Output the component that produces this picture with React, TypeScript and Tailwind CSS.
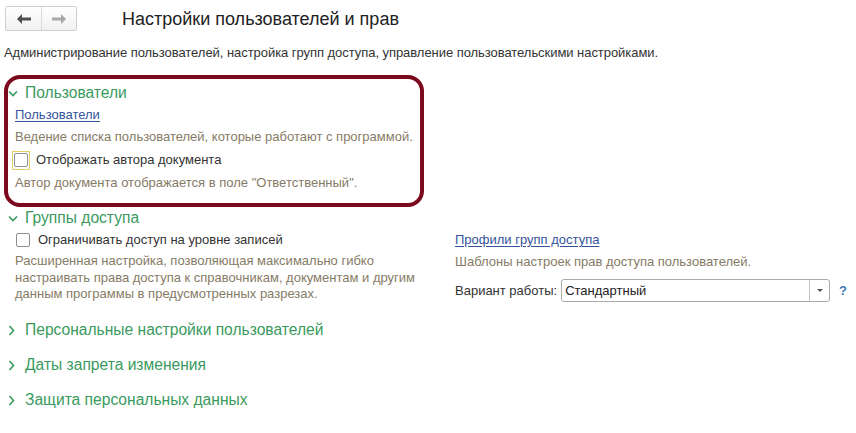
const green = 'text-[#3a9a5e]';
const note = 'text-[#867b66]';

function Chevron({ open }: { open?: boolean }) {
  return open ? (
    <svg width="10" height="7" viewBox="0 0 10 7" fill="none" stroke="currentColor" strokeWidth="1.6">
      <polyline points="1,1.5 5,5.5 9,1.5" />
    </svg>
  ) : (
    <svg width="7" height="11" viewBox="0 0 7 11" fill="none" stroke="currentColor" strokeWidth="1.6">
      <polyline points="1.5,1 5.5,5.5 1.5,10" />
    </svg>
  );
}

function Header({ title, open, inBox }: { title: string; open?: boolean; inBox?: boolean }) {
  return (
    <div className={`flex items-center h-full ${inBox ? 'pl-[0px]' : 'pl-[8px]'}`}>
      <div className={`w-[17px] flex ${green}`}>
        <Chevron open={open} />
      </div>
      <span className={`text-[15.6px] ${green}`}>{title}</span>
    </div>
  );
}

function Checkbox({ focused }: { focused?: boolean }) {
  return (
    <div className={`w-[18px] h-[19px] flex items-center justify-center ${focused ? 'border border-[#e6cf6a]' : ''}`}>
      <div className="w-[14px] h-[14px] border border-[#8f8f8f] rounded-[2px] bg-white" />
    </div>
  );
}

function Arrow({ dir, color }: { dir: 'left' | 'right'; color: string }) {
  return (
    <svg width="14" height="10" viewBox="0 0 14 10" style={{ transform: dir === 'right' ? 'scaleX(-1)' : undefined }}>
      <path d="M0 5 L5 0 L5 3.5 L14 3.5 L14 6.5 L5 6.5 L5 10 Z" fill={color} />
    </svg>
  );
}

export default function App() {
  return (
    <div className="w-[856px] h-[433px] bg-white text-[#333] overflow-hidden" style={{ fontFamily: '"Liberation Sans", Arial, sans-serif' }}>
      {/* Top bar */}
      <div className="flex items-center pt-[6px] pl-[5px] h-[31px]">
        <div className="flex w-[72px] h-[25px] border border-[#cfcfcf] rounded-[2px] bg-gradient-to-b from-white to-[#f1f1f1]">
          <div className="w-[36px] flex items-center justify-center border-r border-[#dadada]">
            <Arrow dir="left" color="#505050" />
          </div>
          <div className="flex-1 flex items-center justify-center">
            <Arrow dir="right" color="#a8a8a8" />
          </div>
        </div>
        <h1 className="ml-[45px] text-[18px] text-[#222] leading-none">Настройки пользователей и прав</h1>
      </div>

      <div className="pl-[4px] mt-[14px] text-[13px] leading-[16px] tracking-[-0.05px]">
        Администрирование пользователей, настройка групп доступа, управление пользовательскими настройками.
      </div>

      {/* Users section */}
      <div className="ml-[4px] mt-[14px] w-[420px] h-[132px] border-4 border-[#7b0a1e] rounded-[16px] pt-[3px] text-[13px]">
        <div className="h-[22px]">
          <Header title="Пользователи" open inBox />
        </div>
        <div className="h-[22px] flex items-center pl-[7px]">
          <span className="text-[#34549b] underline underline-offset-2">Пользователи</span>
        </div>
        <div className={`h-[22px] flex items-center pl-[7px] ${note}`}>
          Ведение списка пользователей, которые работают с программой.
        </div>
        <div className="h-[24px] flex items-center pl-[4px] gap-[6px]">
          <Checkbox focused />
          <span>Отображать автора документа</span>
        </div>
        <div className={`h-[22px] flex items-center pl-[7px] ${note}`}>
          Автор документа отображается в поле "Ответственный".
        </div>
      </div>

      {/* Access groups */}
      <div className="h-[22px]">
        <Header title="Группы доступа" open />
      </div>
      <div className="flex text-[13px]">
        <div className="w-[455px] pl-[15px]">
          <div className="h-[21px] flex items-center gap-[6px] -ml-[1px]">
            <Checkbox />
            <span>Ограничивать доступ на уровне записей</span>
          </div>
          <div className={`mt-[3px] leading-[16.5px] ${note}`}>
            Расширенная настройка, позволяющая максимально гибко<br />
            настраивать права доступа к справочникам, документам и другим<br />
            данным программы в предусмотренных разрезах.
          </div>
        </div>
        <div className="flex-1">
          <div className="h-[21px] flex items-center">
            <span className="text-[#34549b] underline underline-offset-2">Профили групп доступа</span>
          </div>
          <div className={`h-[22px] flex items-center mt-[1px] ${note}`}>Шаблоны настроек прав доступа пользователей.</div>
          <div className="flex items-center mt-[6px] h-[23px]">
            <div className="w-[375px] flex items-center gap-[4px]">
              <span className="whitespace-nowrap">Вариант работы:</span>
              <div className="flex-1 flex h-[23px] border border-[#ababab] rounded-[3px] bg-white">
                <div className="flex-1 flex items-center pl-[3px] text-[#222]">Стандартный</div>
                <div className="w-[20px] flex items-center justify-center border-l border-[#c4c4c4]">
                  <div className="w-0 h-0 border-l-[3px] border-r-[3px] border-t-[3px] border-l-transparent border-r-transparent border-t-[#555]" />
                </div>
              </div>
            </div>
            <span className="ml-[9px] text-[#3d7ab8] font-bold text-[13px]">?</span>
          </div>
        </div>
      </div>

      {/* Collapsed sections */}
      <div className="mt-[10px] h-[35px]">
        <Header title="Персональные настройки пользователей" />
      </div>
      <div className="h-[35px]">
        <Header title="Даты запрета изменения" />
      </div>
      <div className="h-[35px]">
        <Header title="Защита персональных данных" />
      </div>
    </div>
  );
}
